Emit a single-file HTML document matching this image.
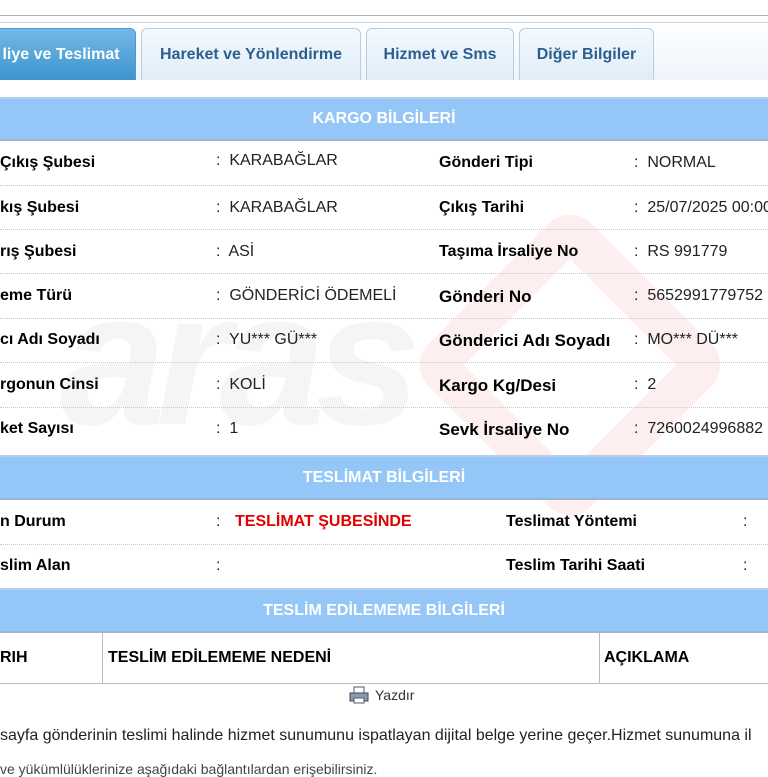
<!DOCTYPE html>
<html><head><meta charset="utf-8"><style>
*{margin:0;padding:0;box-sizing:border-box}
body{width:768px;height:768px;overflow:hidden;background:#fff;font-family:"Liberation Sans",Arial,sans-serif;position:relative;color:#000}
.a{position:absolute;white-space:nowrap}
.tabbar{position:absolute;left:0;top:22px;width:768px;height:58px;background:linear-gradient(#fff,#eef4fa);border-top:1px solid #c8d4e0}
.tab{position:absolute;top:28px;height:52px;border:1px solid #b8cde0;border-bottom:none;border-radius:6px 6px 0 0;background:linear-gradient(#f4f9fd,#dfedf8);color:#2c5f8f;font-weight:bold;font-size:16px;text-align:center;line-height:52px}
.act{background:linear-gradient(#74b8e6,#3d94cf);color:#fff;border-color:#4a9ad2}
.hd{position:absolute;left:0;width:768px;background:#94c6f7;color:#fff;font-weight:bold;font-size:16px;text-align:center;border-top:2px solid #b4d0e8;border-bottom:2px solid #9cb6cc}
.ln{position:absolute;left:0;width:768px;border-top:1px dotted #c8c8c8}
.b{font-weight:bold;font-size:16px}
.v{font-size:16px;color:#222}
</style></head><body>
<div class="a" style="left:0;top:15px;width:768px;border-top:1px solid #b0b0b0"></div>
<div class="tabbar"></div>
<div class="tab act" style="left:-14px;width:150px">liye ve Teslimat</div>
<div class="tab" style="left:141px;width:220px">Hareket ve Yönlendirme</div>
<div class="tab" style="left:366px;width:148px">Hizmet ve Sms</div>
<div class="tab" style="left:519px;width:135px">Diğer Bilgiler</div>

<!-- watermark -->
<div class="a" style="left:60px;top:250px;font-size:190px;font-weight:bold;font-style:italic;color:#000;opacity:.035;letter-spacing:-10px">aras</div>
<div class="a" style="left:455px;top:250px;width:230px;height:230px;transform:rotate(45deg);border:40px solid #e03030;border-radius:30px;opacity:.08"></div>

<div class="hd" style="top:97px;height:44px;line-height:40px">KARGO BİLGİLERİ</div>
<div class="ln" style="top:185px"></div><div class="ln" style="top:229px"></div><div class="ln" style="top:273px"></div><div class="ln" style="top:318px"></div><div class="ln" style="top:362px"></div><div class="ln" style="top:407px"></div>

<div class="a b" style="left:0;top:154px">Çıkış Şubesi</div><div class="a v" style="left:216px;top:152px">:&nbsp; KARABAĞLAR</div>
<div class="a b" style="left:439px;top:154px">Gönderi Tipi</div><div class="a v" style="left:634px;top:154px">:&nbsp; NORMAL</div>
<div class="a b" style="left:0;top:199px">kış Şubesi</div><div class="a v" style="left:216px;top:199px">:&nbsp; KARABAĞLAR</div>
<div class="a b" style="left:439px;top:199px">Çıkış Tarihi</div><div class="a v" style="left:634px;top:199px">:&nbsp; 25/07/2025 00:00</div>
<div class="a b" style="left:0;top:243px">rış Şubesi</div><div class="a v" style="left:216px;top:243px">:&nbsp; ASİ</div>
<div class="a b" style="left:439px;top:243px">Taşıma İrsaliye No</div><div class="a v" style="left:634px;top:243px">:&nbsp; RS 991779</div>
<div class="a b" style="left:0;top:287px">eme Türü</div><div class="a v" style="left:216px;top:287px">:&nbsp; GÖNDERİCİ ÖDEMELİ</div>
<div class="a b" style="left:439px;top:287px;font-size:17px">Gönderi No</div><div class="a v" style="left:634px;top:287px">:&nbsp; 5652991779752</div>
<div class="a b" style="left:0;top:331px">cı Adı Soyadı</div><div class="a v" style="left:216px;top:331px">:&nbsp; YU*** GÜ***</div>
<div class="a b" style="left:439px;top:331px;font-size:17px">Gönderici Adı Soyadı</div><div class="a v" style="left:634px;top:331px">:&nbsp; MO*** DÜ***</div>
<div class="a b" style="left:0;top:376px">rgonun Cinsi</div><div class="a v" style="left:216px;top:376px">:&nbsp; KOLİ</div>
<div class="a b" style="left:439px;top:376px;font-size:17px">Kargo Kg/Desi</div><div class="a v" style="left:634px;top:376px">:&nbsp; 2</div>
<div class="a b" style="left:0;top:420px">ket Sayısı</div><div class="a v" style="left:216px;top:420px">:&nbsp; 1</div>
<div class="a b" style="left:439px;top:420px;font-size:17px">Sevk İrsaliye No</div><div class="a v" style="left:634px;top:420px">:&nbsp; 7260024996882</div>

<div class="hd" style="top:455px;height:45px;line-height:41px">TESLİMAT BİLGİLERİ</div>
<div class="a b" style="left:0;top:513px">n Durum</div><div class="a v" style="left:216px;top:513px">:</div>
<div class="a b" style="left:235px;top:513px;color:#e00000">TESLİMAT ŞUBESİNDE</div>
<div class="a b" style="left:506px;top:513px">Teslimat Yöntemi</div><div class="a v" style="left:743px;top:513px">:</div>
<div class="ln" style="top:544px"></div>
<div class="a b" style="left:0;top:557px">slim Alan</div><div class="a v" style="left:216px;top:557px">:</div>
<div class="a b" style="left:506px;top:557px">Teslim Tarihi Saati</div><div class="a v" style="left:743px;top:557px">:</div>

<div class="hd" style="top:588px;height:45px;line-height:41px">TESLİM EDİLEMEME BİLGİLERİ</div>
<div class="a" style="left:0;top:633px;width:768px;height:51px;border-bottom:1px solid #bbb"></div>
<div class="a" style="left:102px;top:633px;height:51px;border-left:1px solid #bbb"></div>
<div class="a" style="left:599px;top:633px;height:51px;border-left:1px solid #bbb"></div>
<div class="a b" style="left:0;top:649px">RIH</div>
<div class="a b" style="left:108px;top:649px">TESLİM EDİLEMEME NEDENİ</div>
<div class="a b" style="left:604px;top:649px">AÇIKLAMA</div>

<svg class="a" style="left:349px;top:686px" width="20" height="18" viewBox="0 0 20 18"><rect x="5" y="1" width="10" height="7" fill="#fff" stroke="#557"/><rect x="1" y="7" width="18" height="8" fill="#8a9ab0" stroke="#445"/><rect x="5" y="12" width="10" height="5" fill="#fff" stroke="#557"/></svg>
<div class="a" style="left:375px;top:687px;font-size:14px;color:#333">Yazdır</div>

<div class="a" style="left:0;top:727px;font-size:16px;color:#222">sayfa gönderinin teslimi halinde hizmet sunumunu ispatlayan dijital belge yerine geçer.Hizmet sunumuna il</div>
<div class="a" style="left:0;top:761px;font-size:14px;color:#444">ve yükümlülüklerinize aşağıdaki bağlantılardan erişebilirsiniz.</div>
</body></html>
